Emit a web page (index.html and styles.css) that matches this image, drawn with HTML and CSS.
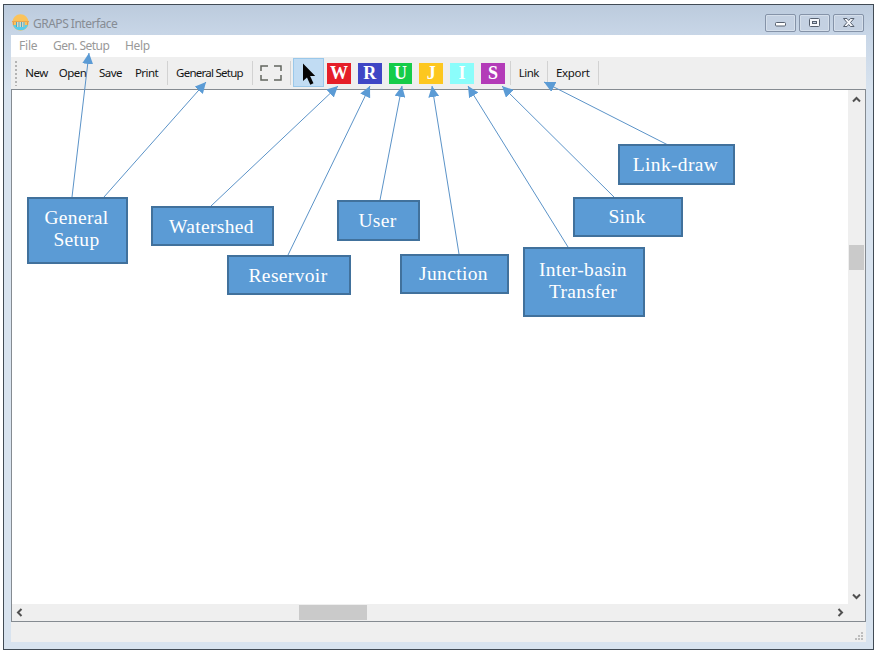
FILE: index.html
```html
<!DOCTYPE html>
<html lang="en">
<head>
<meta charset="utf-8">
<title>GRAPS Interface</title>
<link rel="stylesheet" href="styles.css">
</head>
<body>
<main class="window">
  <header class="titlebar">
    <svg class="logo" width="17" height="17" viewBox="0 0 17 17">
      <circle cx="8.5" cy="8.5" r="8.2" fill="#fbc35a"/>
      <path d="M1 11h15a8 8 0 0 1-15 0z" fill="#55cdef"/>
      <path d="M0 7h17v1H0z" fill="#e9a752"/>
      <path d="M4 8h9v5H4z" fill="#d7d8c6"/>
      <path d="M4.5 8v5M7 8v5M9.500 8v5M12 8v5" stroke="#55a9bb"/>
      <path d="M1.500 8v3M15.500 8v3" stroke="#de9a55"/>
    </svg>
    <h1 class="title">GRAPS Interface</h1>
    <div class="controls">
      <button class="control" aria-label="Minimize"><svg width="31" height="18"><rect x="10.500" y="8.500" width="10" height="3.500" rx="1" fill="#fff" stroke="#56606f"/></svg></button>
      <button class="control" aria-label="Maximize"><svg width="31" height="18"><rect x="10.500" y="4.500" width="10" height="8" rx="1" fill="#f6f8fc" stroke="#56606f"/><rect x="13.500" y="7.500" width="4" height="2" fill="#c2cfe0" stroke="#56606f"/></svg></button>
      <button class="control" aria-label="Close"><svg width="31" height="18"><path d="M10.500 4.500h3.500l1.700 2 1.800-2H21l-3.500 4 3.500 4h-3.500l-1.800-2-1.700 2h-3.500l3.400-4z" fill="#f6f8fc" stroke="#56606f"/></svg></button>
    </div>
  </header>
  <nav class="menubar"><span class="menu file">File</span><span class="menu gen">Gen. Setup</span><span class="menu help">Help</span></nav>
  <div class="toolbar">
    <span class="grip"></span>
    <button class="tool new">New</button>
    <button class="tool open">Open</button>
    <button class="tool save">Save</button>
    <button class="tool print">Print</button>
    <i class="sep"></i>
    <button class="tool general">General Setup</button>
    <i class="sep"></i>
    <svg class="fit" width="22" height="16" viewBox="0 0 22 16"><path d="M1 6V1h7M14 1h7v5M21 10v5h-7M8 15H1v-5" fill="none" stroke="#62665f" stroke-width="1.500"/></svg>
    <i class="sep"></i>
    <span class="pointer"><svg width="30" height="29" viewBox="0 0 30 29"><path d="M10 5.500v17.500l4-3.500 3.300 7.300 3.200-1.500-3.400-7.200h5.100z" fill="#050505"/></svg></span>
    <div class="nodes">
      <b class="node red">W</b><b class="node blue">R</b><b class="node green">U</b><b class="node yellow">J</b><b class="node cyan">I</b><b class="node purple">S</b>
    </div>
    <i class="sep"></i>
    <button class="tool link">Link</button>
    <i class="sep"></i>
    <button class="tool export">Export</button>
    <i class="sep"></i>
  </div>
  <section class="canvas">
    <div class="paper"></div>
    <div class="vscroll">
      <svg width="9" height="7" viewBox="0 0 9 7"><path d="M1 5.500l3.500-3.500L8 5.500" class="chevron"/></svg>
      <span class="vthumb"></span>
      <svg class="down" width="9" height="7" viewBox="0 0 9 7"><path d="M1 1.500L4.500 5 8 1.500" class="chevron"/></svg>
    </div>
    <div class="hscroll">
      <svg width="7" height="9" viewBox="0 0 7 9"><path d="M5.500 1L2 4.500 5.500 8" class="chevron"/></svg>
      <span class="hthumb"></span>
      <svg class="right" width="7" height="9" viewBox="0 0 7 9"><path d="M1.500 1L5 4.500 1.500 8" class="chevron"/></svg>
    </div>
    <div class="corner"></div>
  </section>
  <footer class="status"><svg width="9" height="9" viewBox="0 0 9 9"><path d="M6 0h2v2H6zM3 3h2v2H3zM6 3h2v2H6zM0 6h2v2H0zM3 6h2v2H3zM6 6h2v2H6z" fill="#bdbdbd"/></svg></footer>
</main>
<svg class="arrows" width="878" height="653" viewBox="0 0 878 653">
  <defs><marker id="head" viewBox="0 0 10 10" refX="10" refY="5" markerWidth="11" markerHeight="11" markerUnits="userSpaceOnUse" orient="auto"><path d="M0 0l10 5-10 5z" fill="#5b9bd5"/></marker></defs>
  <g class="lines">
    <path d="M72 197L89 53"/><path d="M104 197L206 82"/><path d="M211 206L338 86"/><path d="M288 255L370 86"/><path d="M380 200L402 86"/><path d="M459 254L432 86"/><path d="M568 247L468 86"/><path d="M615 198L502 86"/><path d="M668 145L544 82"/>
  </g>
</svg>
<div class="label general-label">General<br>Setup</div>
<div class="label watershed">Watershed</div>
<div class="label reservoir">Reservoir</div>
<div class="label user">User</div>
<div class="label junction">Junction</div>
<div class="label transfer">Inter-basin<br>Transfer</div>
<div class="label sink">Sink</div>
<div class="label link-draw">Link-draw</div>
</body>
</html>
```
FILE: styles.css
```css
* { box-sizing: border-box; }
body { margin: 0; width: 878px; height: 653px; padding: 4px 0 0 3px; overflow: hidden; background: #fff; font-family: "Noto Sans", sans-serif; }
button { padding: 0; border: 0; background: none; font: inherit; color: inherit; letter-spacing: inherit; }
.window { width: 871px; height: 646px; border: 1px solid #414b55; padding: 0 7px; display: flex; flex-direction: column; background: linear-gradient(#c0d0e3, #d8e3ef 85px); }
.titlebar { height: 30px; flex: none; display: flex; align-items: flex-start; margin: 0 -7px; padding: 0 9px 0 8px; background: linear-gradient(#bccbdd, #c8d6e7); }
.logo { margin: 9px 4px 0 0; }
.title { margin: 10px 0 0; font-size: 12px; line-height: 17px; font-weight: 400; color: #868c94; letter-spacing: -.5px; }
.controls { display: flex; gap: 3px; margin: 9px 0 0 auto; }
.control { width: 31px; height: 18px; border: 1px solid #8593a8; border-radius: 2px; background: #c4d1e2; box-shadow: inset 0 0 0 1px #d5dfeb; }
.control svg { display: block; margin: -1px; }
.menubar { height: 22px; flex: none; display: flex; background: #fff; font-size: 12px; line-height: 21px; color: #999; letter-spacing: -.55px; }
.menu { white-space: nowrap; }
.file { width: 34px; margin-left: 8px; letter-spacing: -.2px; }
.gen { width: 72px; }
.help { letter-spacing: -.3px; }
.toolbar { height: 32px; flex: none; display: flex; align-items: center; background: #efefef; font-size: 11.5px; color: #151515; letter-spacing: -.55px; }
.grip { width: 2px; height: 25px; margin: 0 4px; background: repeating-linear-gradient(#b4b4b4 0 2px, transparent 2px 4px); }
.tool { height: 28px; padding-bottom: 1px; text-align: center; white-space: nowrap; }
.new { width: 31px; }
.open { width: 41px; }
.save { width: 35px; }
.print { width: 37px; margin-right: 2px; }
.general { width: 83px; margin-right: 1px; letter-spacing: -.75px; }
.link { width: 36px; }
.export { width: 50px; letter-spacing: -.3px; }
.sep { width: 1px; height: 24px; background: #d2d2d2; }
.fit { margin: 0 8px 0 7px; }
.pointer { width: 31px; height: 29px; margin: 0 3px 2px 2px; border: 1px solid #9ac8ea; background: #c1dcf3; }
.pointer svg { display: block; margin: -1px; }
.nodes { display: flex; gap: 7px; margin-right: 5px; }
.node { width: 23.8px; height: 21px; color: #fff; font: bold 18px/21px "Liberation Serif", serif; text-align: center; letter-spacing: 0; }
.red { background: #e51e28; }
.blue { background: #3f46c5; }
.green { background: #16cc49; }
.yellow { background: #fdc71f; }
.cyan { background: #8bfdfb; }
.purple { background: #b33bb8; }
.canvas { height: 533px; flex: none; display: grid; grid-template: 1fr 17px / 1fr 17px; border: 1px solid #858b91; }
.paper { background: #fff; }
.vscroll, .hscroll, .corner { background: #efefef; }
.vscroll { display: flex; flex-direction: column; align-items: center; padding: 6px 0 4px; }
.vthumb { width: 15px; height: 25px; margin-top: 142px; background: #cacaca; }
.down { margin-top: auto; }
.hscroll { display: flex; align-items: center; padding: 0 4px; }
.hthumb { width: 68px; height: 15px; margin-left: 276px; background: #cacaca; }
.right { margin-left: auto; }
.chevron { fill: none; stroke: #505050; stroke-width: 2; }
.status { height: 20px; flex: none; display: flex; justify-content: flex-end; align-items: flex-end; padding: 0 2px 1px; background: #efefef; }
.arrows { position: absolute; left: 0; top: 0; }
.lines { fill: none; stroke: #5b93c8; stroke-width: 1; }
.lines path { marker-end: url(#head); }
.label { position: absolute; display: flex; align-items: center; justify-content: center; padding-right: 2px; border: 2px solid #41719c; background: #5b9bd5; color: #fff; font: 19.5px/22px "Liberation Serif", serif; text-align: center; letter-spacing: .35px; }
.general-label { left: 27px; top: 197px; width: 101px; height: 67px; padding-bottom: 3px; }
.watershed { left: 151px; top: 206px; width: 123px; height: 40px; padding-top: 2px; }
.reservoir { left: 227px; top: 255px; width: 124px; height: 40px; padding-top: 2px; }
.user { left: 337px; top: 200px; width: 83px; height: 41px; }
.junction { left: 400px; top: 254px; width: 109px; height: 40px; }
.transfer { left: 523px; top: 247px; width: 122px; height: 70px; padding-bottom: 3px; }
.sink { left: 573px; top: 197px; width: 110px; height: 40px; }
.link-draw { left: 618px; top: 144px; width: 117px; height: 41px; }
```
